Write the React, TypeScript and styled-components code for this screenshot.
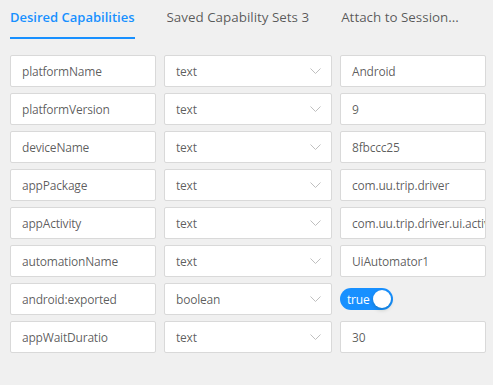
import React from "react";
import styled, { createGlobalStyle } from "styled-components";

const Global = createGlobalStyle`
  html, body { margin: 0; padding: 0; background: #f0f0f0; }
  body { font-family: "Open Sans", "Noto Sans", sans-serif; }
`;

const Page = styled.div`
  width: 493px;
  height: 385px;
  background: #f0f0f0;
  box-sizing: border-box;
  overflow: hidden;
`;

const TabBar = styled.div`
  display: flex;
  gap: 32px;
  padding-left: 10px;
  height: 39px;
`;

const Tab = styled.div<{ $active?: boolean }>`
  font-size: ${(p) => (p.$active ? "13px" : "13.4px")};
  line-height: 35px;
  color: ${(p) => (p.$active ? "#1890ff" : "rgba(0,0,0,0.65)")};
  font-weight: ${(p) => (p.$active ? 600 : 400)};
  white-space: nowrap;
  border-bottom: 2px solid ${(p) => (p.$active ? "#1890ff" : "transparent")};
  height: 39px;
  box-sizing: border-box;
`;

const Grid = styled.div`
  display: grid;
  grid-template-columns: 146px 168px 146px;
  grid-auto-rows: 32px;
  column-gap: 8px;
  row-gap: 6px;
  padding: 16px 0 0 10px;
`;

const Field = styled.div`
  box-sizing: border-box;
  border: 1px solid #d9d9d9;
  border-radius: 2px;
  background: #fff;
  display: flex;
  align-items: center;
  padding: 0 11px;
  font-size: 12px;
  letter-spacing: -0.2px;
  color: rgba(0,0,0,0.65);
  white-space: nowrap;
  overflow: hidden;
`;

const SelectBox = styled(Field)`
  justify-content: space-between;
  padding-right: 10px;
`;

const ValueBox = styled(Field)`
  padding-left: 11px;
  padding-right: 0;
`;

const Cell = styled.div`
  display: flex;
  align-items: center;
`;

const Switch = styled.div`
  width: 53px;
  height: 22px;
  border-radius: 11px;
  background: #1890ff;
  display: flex;
  align-items: center;
  justify-content: space-between;
  padding: 0 2px 0 7px;
  box-sizing: border-box;
  color: #fff;
  font-size: 12px;
  letter-spacing: -0.2px;
`;

const Knob = styled.div`
  width: 18px;
  height: 18px;
  border-radius: 50%;
  background: #fff;
  box-shadow: 0 2px 4px rgba(0, 35, 11, 0.2);
`;

const Chevron = () => (
  <svg width="11" height="6" viewBox="0 0 11 6">
    <path d="M0.5 0.5 L5.5 5.5 L10.5 0.5" fill="none" stroke="#bfbfbf" strokeWidth="1" />
  </svg>
);

const rows: { name: string; type: string; value: string }[] = [
  { name: "platformName", type: "text", value: "Android" },
  { name: "platformVersion", type: "text", value: "9" },
  { name: "deviceName", type: "text", value: "8fbccc25" },
  { name: "appPackage", type: "text", value: "com.uu.trip.driver" },
  { name: "appActivity", type: "text", value: "com.uu.trip.driver.ui.activity" },
  { name: "automationName", type: "text", value: "UiAutomator1" },
  { name: "android:exported", type: "boolean", value: "true" },
  { name: "appWaitDuratio", type: "text", value: "30" },
];

export default function App() {
  return (
    <Page>
      <Global />
      <TabBar>
        <Tab $active>Desired Capabilities</Tab>
        <Tab>Saved Capability Sets 3</Tab>
        <Tab>Attach to Session...</Tab>
      </TabBar>
      <Grid>
        {rows.map((r) => (
          <React.Fragment key={r.name}>
            <Field>{r.name}</Field>
            <SelectBox>
              <span>{r.type}</span>
              <Chevron />
            </SelectBox>
            {r.type === "boolean" ? (
              <Cell>
                <Switch>
                  <span>true</span>
                  <Knob />
                </Switch>
              </Cell>
            ) : (
              <ValueBox>{r.value}</ValueBox>
            )}
          </React.Fragment>
        ))}
      </Grid>
    </Page>
  );
}
